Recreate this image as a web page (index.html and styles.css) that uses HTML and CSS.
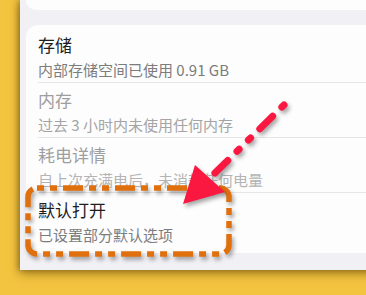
FILE: index.html
```html
<!DOCTYPE html>
<html lang="zh-CN">
<head>
<meta charset="utf-8">
<link rel="stylesheet" href="styles.css">
</head>
<body>
<div class="stage">
  <div class="screen">
    <div class="card card-top"></div>
    <div class="card list">
      <div class="row">
        <div class="title">存储</div>
        <div class="sub">内部存储空间已使用 0.91 GB</div>
      </div>
      <div class="row dim">
        <div class="title">内存</div>
        <div class="sub">过去 3 小时内未使用任何内存</div>
      </div>
      <div class="row dim faint">
        <div class="title">耗电详情</div>
        <div class="sub">自上次充满电后，未消耗任何电量</div>
      </div>
      <div class="row last">
        <div class="title">默认打开</div>
        <div class="sub">已设置部分默认选项</div>
      </div>
    </div>
  </div>
  <svg class="overlay" width="366" height="295" viewBox="0 0 366 295">
    <rect class="box" x="28" y="188" width="201" height="66" rx="9" ry="9"/>
    <g class="arrow">
      <line class="shaft" x1="284" y1="105" x2="212" y2="176"/>
      <polygon class="head" points="183,204 195,165 225,192"/>
    </g>
  </svg>
</div>
</body>
</html>
```
FILE: styles.css
```css
html, body {
  margin: 0;
  padding: 0;
}
body {
  width: 366px;
  height: 295px;
  overflow: hidden;
  background: #f3c43f;
  font-family: "Noto Sans CJK SC", "Noto Sans", sans-serif;
}
.stage {
  position: relative;
  width: 366px;
  height: 295px;
  overflow: hidden;
}
.screen {
  margin-left: 20px;
  width: 380px;
  height: 270px;
  background: #f0f0f5;
  padding-left: 6px;
  box-sizing: border-box;
  box-shadow: -2px 0 5px rgba(90, 60, 0, 0.35), 0 3px 10px rgba(80, 50, 0, 0.55);
}
.card {
  background: #fdfdfe;
  border-radius: 12px;
}
.card-top {
  height: 10px;
  border-radius: 0 0 12px 12px;
  margin-bottom: 15px;
}
.list {
  padding: 3px 0 6px 12px;
}
.row {
  padding: 5px 0 2px 0;
  border-bottom: 1px solid #e6e6ea;
  display: flex;
  flex-direction: column;
  gap: 3px;
}
.row.last {
  border-bottom: none;
}
.title {
  font-size: 17px;
  line-height: 24px;
  color: #1e1e1e;
  white-space: nowrap;
}
.sub {
  font-size: 15px;
  line-height: 20px;
  color: #7c7c7c;
  white-space: nowrap;
}
.dim .title {
  color: #9e9e9e;
}
.dim .sub {
  color: #a4a4a4;
}
.faint .sub {
  color: #b4b4b4;
}
.overlay {
  position: absolute;
  left: 0;
  top: 0;
}
.box {
  fill: none;
  stroke: #e0700e;
  stroke-width: 5.5;
  stroke-dasharray: 7 6 7 6 20 6;
  filter: drop-shadow(2px 3px 2px rgba(0, 0, 0, 0.35));
}
.arrow {
  filter: drop-shadow(2px 3px 2px rgba(0, 0, 0, 0.35));
}
.shaft {
  stroke: #fa1740;
  stroke-width: 7;
  stroke-linecap: round;
  stroke-dasharray: 3 13 18 13 3 13;
}
.head {
  fill: #fa1740;
}
```
